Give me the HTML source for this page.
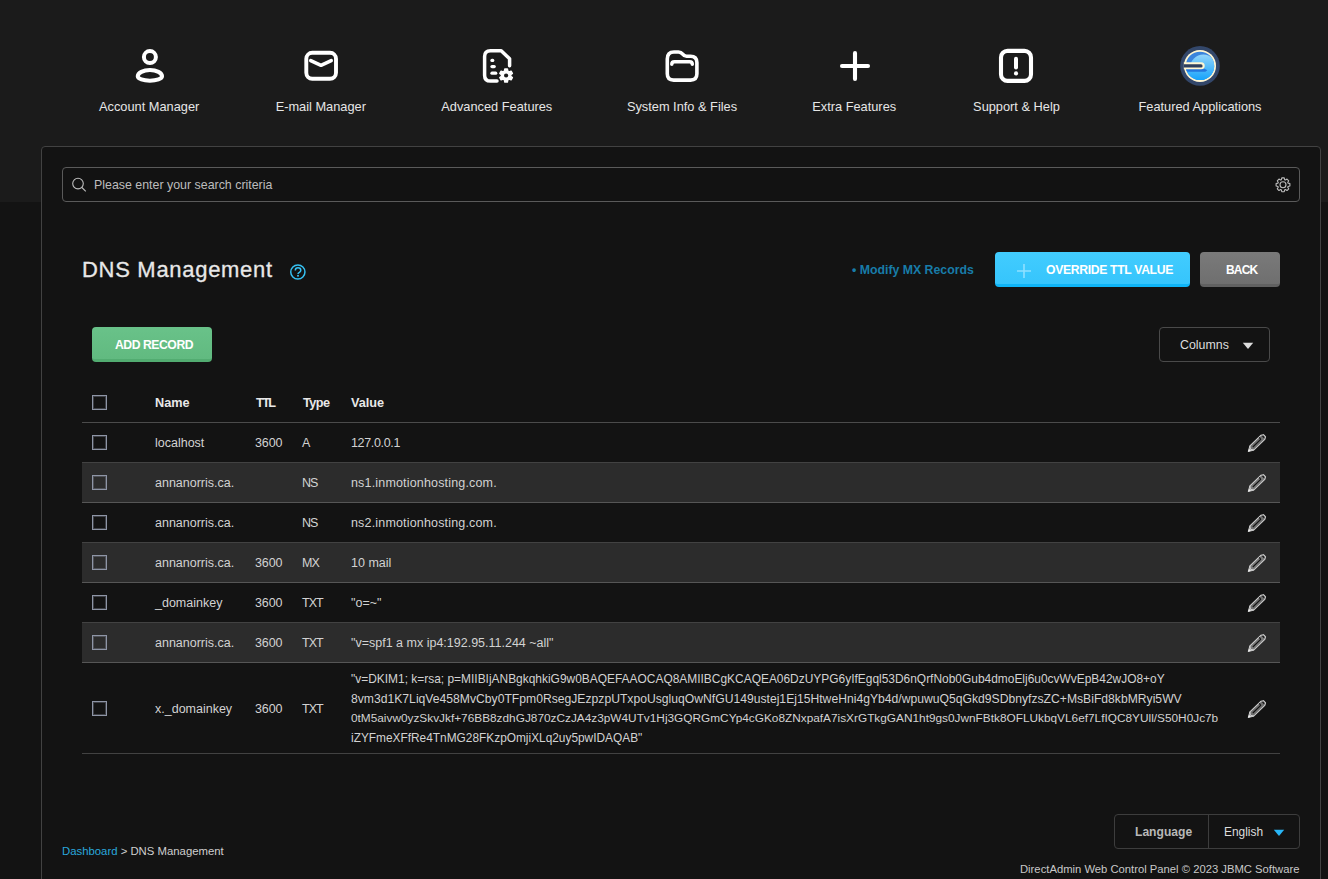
<!DOCTYPE html>
<html><head><meta charset="utf-8">
<style>
*{box-sizing:border-box;margin:0;padding:0}
html,body{width:1328px;height:879px;overflow:hidden;background:#131313;font-family:"Liberation Sans",sans-serif;color:#ddd}
.a{position:absolute;white-space:nowrap;line-height:14px}
#hdr{position:absolute;left:0;top:0;width:1328px;height:202px;background:#1b1b1b}
.nl{position:absolute;top:100px;width:200px;text-align:center;font-size:12.8px;color:#e6e6e6;line-height:14px;white-space:nowrap}
#panel{position:absolute;left:41px;top:146px;width:1280px;height:760px;background:#131313;border:1px solid #424242;border-radius:4px}
#search{position:absolute;left:62px;top:167px;width:1238px;height:35px;border:1px solid #5a5a5a;border-radius:4px;background:#121212}
.btn{position:absolute;border-radius:4px}
.cb{position:absolute;left:92px;width:15px;height:15px;border:1px solid #8e95a6;box-shadow:inset 0 0 0 1px rgba(142,149,166,.35)}
.row{position:absolute;left:82px;width:1198px;border-bottom:1px solid rgba(255,255,255,.2)}
.alt{background:#2c2c2c}
.cell{position:absolute;font-size:12.5px;color:#d2d2d2;line-height:14px;white-space:nowrap}
.th{position:absolute;font-size:12.7px;color:#e8e8e8;font-weight:bold;line-height:14px;top:396px}
.b{font-weight:bold;color:#fff}
</style></head><body>
<div id="hdr"></div>
<div class="nl" style="left:49.2px">Account Manager</div>
<div class="nl" style="left:220.8px">E-mail Manager</div>
<div class="nl" style="left:396.8px">Advanced Features</div>
<div class="nl" style="left:582.0px">System Info &amp; Files</div>
<div class="nl" style="left:754.2px">Extra Features</div>
<div class="nl" style="left:916.5px">Support &amp; Help</div>
<div class="nl" style="left:1100.0px">Featured Applications</div>
<div id="panel"></div>
<div id="search"></div>
<svg width="1328" height="210" viewBox="0 0 1328 210" style="position:absolute;left:0;top:0">
 <defs>
  <linearGradient id="fg" gradientUnits="userSpaceOnUse" x1="0" y1="53" x2="0" y2="80">
   <stop offset="0" stop-color="#9ad8fb"/><stop offset="1" stop-color="#16a3fb"/>
  </linearGradient>
  <clipPath id="fc"><circle cx="1200" cy="65.9" r="14.2"/></clipPath>
 </defs>
 <g fill="none" stroke="#fff" stroke-width="4" stroke-linecap="round" stroke-linejoin="round">
  <circle cx="149.9" cy="57.05" r="6"/>
  <path d="M137.8 76.3 A12.1 6.3 0 0 1 162 76.3 A12.1 4.4 0 0 1 137.8 76.3Z" stroke-width="4.1"/>
  <rect x="306.3" y="52.8" width="29.7" height="26" rx="6" stroke-width="3.9"/>
  <polyline points="310.75,60.6 321,65.3 331.2,60.6" stroke-width="3.6"/>
  <path d="M497 81.1 H490.5 Q484.6 81.1 484.6 75.2 V56.6 Q484.6 50.7 490.5 50.7 H501.2 L509.6 58.8 V65.8" stroke-width="3.5"/>
  <path d="M667.3 73.8 V59 Q667.3 52 674 52 H678.5 Q681 52 682.7 54.2 Q684.2 56.2 686.5 56.2 H690.5 Q696.9 56.2 696.9 62.6 V73.8 Q696.9 80.1 690.5 80.1 H673.7 Q667.3 80.1 667.3 73.8Z" stroke-width="3.6"/>
  <path d="M671.8 64.3 Q671.8 61.7 674.5 61.7 H689.6 Q692.3 61.7 692.3 64.3" stroke-width="3.5"/>
  <line x1="855" y1="53" x2="855" y2="79" stroke-width="4.1"/>
  <line x1="842" y1="66" x2="868" y2="66" stroke-width="4.1"/>
  <rect x="1001" y="50.9" width="30" height="30" rx="6.5" stroke-width="4.1"/>
  <line x1="1016" y1="58.8" x2="1016" y2="67.6"/>
 </g>
 <g stroke="#fff" stroke-width="3.3" stroke-linecap="round">
  <line x1="492" y1="60.4" x2="492.7" y2="60.4"/>
  <line x1="492" y1="66.6" x2="494.2" y2="66.6"/>
  <line x1="492" y1="73.2" x2="495.7" y2="73.2"/>
 </g>
 <circle cx="1016" cy="73.4" r="2.1" fill="#fff"/>
 <path d="M504.42 71.11 L504.84 69.02 L507.36 69.02 L507.78 71.11 L509.06 71.85 L511.08 71.17 L512.34 73.35 L510.74 74.76 L510.74 76.24 L512.34 77.65 L511.08 79.83 L509.06 79.15 L507.78 79.89 L507.36 81.98 L504.84 81.98 L504.42 79.89 L503.14 79.15 L501.12 79.83 L499.86 77.65 L501.46 76.24 L501.46 74.76 L499.86 73.35 L501.12 71.17 L503.14 71.85Z" fill="#fff" stroke="#fff" stroke-width="1.5" stroke-linejoin="round"/>
 <circle cx="506.1" cy="75.5" r="2.1" fill="#1b1b1b"/>
 <circle cx="1200" cy="65.9" r="19.8" fill="#33476a"/>
 <circle cx="1200" cy="65.9" r="16" fill="#fff6d2"/>
 <g clip-path="url(#fc)">
  <rect x="1184" y="50" width="32" height="32" fill="#3a84dc"/>
  <circle cx="1203.3" cy="67.8" r="13.2" fill="url(#fg)"/>
  <rect x="1184" y="66" width="32" height="16" fill="url(#fg)"/>
  <path d="M1184 68 H1203 L1207.4 70.3 L1205.4 71.8 H1184Z" fill="#2376de"/>
 </g>
 <path d="M1183.8 62.3 H1201.2 A3.5 3.5 0 0 1 1201.2 69.3 H1183.8Z" fill="#fff6d2"/>
 <path d="M1183.8 64.3 H1201 A1.6 1.6 0 0 1 1201 67.5 H1183.8Z" fill="#2e3f5e"/>
 <g fill="none" stroke="#bdbdbd" stroke-width="1.1">
  <circle cx="78" cy="183.6" r="5.3"/>
  <line x1="81.9" y1="187.5" x2="85.8" y2="191.4"/>
  <path d="M1281.32 179.77 L1281.78 177.91 L1284.22 177.91 L1284.68 179.77 L1285.36 180.06 L1287.02 179.07 L1288.73 180.78 L1287.74 182.44 L1288.03 183.12 L1289.89 183.58 L1289.89 186.02 L1288.03 186.48 L1287.74 187.16 L1288.73 188.82 L1287.02 190.53 L1285.36 189.54 L1284.68 189.83 L1284.22 191.69 L1281.78 191.69 L1281.32 189.83 L1280.64 189.54 L1278.98 190.53 L1277.27 188.82 L1278.26 187.16 L1277.97 186.48 L1276.11 186.02 L1276.11 183.58 L1277.97 183.12 L1278.26 182.44 L1277.27 180.78 L1278.98 179.07 L1280.64 180.06Z" stroke-linejoin="round"/>
  <circle cx="1283" cy="184.8" r="3"/>
 </g>
</svg>

<div class="a" style="left:94px;top:178px;font-size:12.4px;color:#bdbdbd">Please enter your search criteria</div>
<div class="a" style="left:82px;top:257px;font-size:22px;letter-spacing:0.7px;-webkit-text-stroke:0.3px #e8e8e8;color:#e8e8e8;line-height:26px">DNS Management</div>
<svg style="position:absolute;left:289px;top:264px" width="18" height="18" viewBox="0 0 18 18"><circle cx="8.85" cy="8" r="7.1" fill="none" stroke="#36c1f2" stroke-width="1.5"/><path d="M6.3 6.4 Q6.3 3.7 9 3.7 Q11.8 3.7 11.8 6.2 Q11.8 7.5 10.4 8.4 Q9 9.2 9 10.1" fill="none" stroke="#36c1f2" stroke-width="1.5" stroke-linecap="butt"/><rect x="8.1" y="10.9" width="1.8" height="1.7" fill="#36c1f2"/></svg>
<div class="a" style="left:852px;top:263px;font-size:12.3px;color:#187ca9;font-weight:bold">&bull; Modify MX Records</div>
<div class="btn" style="left:995px;top:252px;width:195px;height:35px;background:linear-gradient(#42ccfe,#36c5fc);border-bottom:3px solid #0fb5f7"></div>
<svg style="position:absolute;left:1016px;top:263px" width="16" height="16" viewBox="0 0 16 16"><path d="M8 1V15M1 8H15" stroke="#8fe0ff" stroke-width="1.6"/></svg>
<div class="a b" style="left:1046px;top:262.5px;font-size:12.2px;letter-spacing:-0.33px">OVERRIDE TTL VALUE</div>
<div class="btn" style="left:1200px;top:252px;width:80px;height:35px;background:linear-gradient(#7a7a7a,#6f6f6f);border-bottom:3px solid #616161"></div>
<div class="a b" style="left:1226px;top:262.5px;font-size:12px;letter-spacing:-0.85px">BACK</div>
<div class="btn" style="left:92px;top:327px;width:120px;height:35px;background:linear-gradient(#69c289,#61ba80);border-bottom:3px solid #52ac71"></div>
<div class="a b" style="left:115px;top:337.5px;font-size:12.2px;letter-spacing:-0.45px">ADD RECORD</div>
<div style="position:absolute;left:1159px;top:327px;width:111px;height:35px;border:1px solid #4a4a4a;border-radius:4px"></div>
<div class="a" style="left:1180px;top:338px;font-size:12.4px;color:#ddd">Columns</div>
<svg style="position:absolute;left:1242px;top:342px" width="12" height="8" viewBox="0 0 12 8"><path d="M0.8 0.8H11.2L6 7Z" fill="#dddddd"/></svg>
<div class="cb" style="top:395px"></div>
<div class="th" style="left:155px;letter-spacing:0px">Name</div>
<div class="th" style="left:256px;letter-spacing:-1.6px">TTL</div>
<div class="th" style="left:303px;letter-spacing:-0.5px">Type</div>
<div class="th" style="left:351px;letter-spacing:0px">Value</div>
<div style="position:absolute;left:82px;top:422px;width:1198px;height:1px;background:#4b4b4b"></div>
<div class="row" style="top:423px;height:40px"></div>
<div class="cb" style="top:435px"></div>
<div class="cell" style="left:155px;top:436px">localhost</div>
<div class="cell" style="left:255px;top:436px;letter-spacing:-0.13px">3600</div>
<div class="cell" style="left:302px;top:436px;letter-spacing:0px">A</div>
<div class="cell" style="left:351px;top:436px;letter-spacing:-0.35px">127.0.0.1</div>
<svg style="position:absolute;left:1246px;top:432px" width="24" height="24" viewBox="0 0 24 24"><g transform="translate(2.3 19.4) rotate(-44)"><path d="M0 0 L5 -2.9 H20.2 L22.6 -1.5 V1.5 L20.2 2.9 H5 Z" fill="rgba(185,185,185,.55)" stroke="#d0d0d0" stroke-width="1" stroke-linejoin="round"/><path d="M6.3 0 H17.6 M17.6 -2.6 V-0.5" stroke="#141414" stroke-width="1.2"/><path d="M5 -2.9 L3 0 L5 2.9" fill="none" stroke="#d0d0d0" stroke-width="0.9"/><path d="M0 0 L2.4 -1.35 L2.4 1.35Z" fill="#eeeeee"/><path d="M20.4 -1.6 L21.6 -0.9 V0.9 L20.4 1.6Z" fill="#141414"/></g></svg>
<div class="row alt" style="top:463px;height:40px"></div>
<div class="cb" style="top:475px"></div>
<div class="cell" style="left:155px;top:476px">annanorris.ca.</div>
<div class="cell" style="left:302px;top:476px;letter-spacing:-1.0px">NS</div>
<div class="cell" style="left:351px;top:476px;letter-spacing:0.17px">ns1.inmotionhosting.com.</div>
<svg style="position:absolute;left:1246px;top:472px" width="24" height="24" viewBox="0 0 24 24"><g transform="translate(2.3 19.4) rotate(-44)"><path d="M0 0 L5 -2.9 H20.2 L22.6 -1.5 V1.5 L20.2 2.9 H5 Z" fill="rgba(185,185,185,.55)" stroke="#d0d0d0" stroke-width="1" stroke-linejoin="round"/><path d="M6.3 0 H17.6 M17.6 -2.6 V-0.5" stroke="#141414" stroke-width="1.2"/><path d="M5 -2.9 L3 0 L5 2.9" fill="none" stroke="#d0d0d0" stroke-width="0.9"/><path d="M0 0 L2.4 -1.35 L2.4 1.35Z" fill="#eeeeee"/><path d="M20.4 -1.6 L21.6 -0.9 V0.9 L20.4 1.6Z" fill="#141414"/></g></svg>
<div class="row" style="top:503px;height:40px"></div>
<div class="cb" style="top:515px"></div>
<div class="cell" style="left:155px;top:516px">annanorris.ca.</div>
<div class="cell" style="left:302px;top:516px;letter-spacing:-1.0px">NS</div>
<div class="cell" style="left:351px;top:516px;letter-spacing:0.17px">ns2.inmotionhosting.com.</div>
<svg style="position:absolute;left:1246px;top:512px" width="24" height="24" viewBox="0 0 24 24"><g transform="translate(2.3 19.4) rotate(-44)"><path d="M0 0 L5 -2.9 H20.2 L22.6 -1.5 V1.5 L20.2 2.9 H5 Z" fill="rgba(185,185,185,.55)" stroke="#d0d0d0" stroke-width="1" stroke-linejoin="round"/><path d="M6.3 0 H17.6 M17.6 -2.6 V-0.5" stroke="#141414" stroke-width="1.2"/><path d="M5 -2.9 L3 0 L5 2.9" fill="none" stroke="#d0d0d0" stroke-width="0.9"/><path d="M0 0 L2.4 -1.35 L2.4 1.35Z" fill="#eeeeee"/><path d="M20.4 -1.6 L21.6 -0.9 V0.9 L20.4 1.6Z" fill="#141414"/></g></svg>
<div class="row alt" style="top:543px;height:40px"></div>
<div class="cb" style="top:555px"></div>
<div class="cell" style="left:155px;top:556px">annanorris.ca.</div>
<div class="cell" style="left:255px;top:556px;letter-spacing:-0.13px">3600</div>
<div class="cell" style="left:302px;top:556px;letter-spacing:-0.8px">MX</div>
<div class="cell" style="left:351px;top:556px;letter-spacing:0px">10 mail</div>
<svg style="position:absolute;left:1246px;top:552px" width="24" height="24" viewBox="0 0 24 24"><g transform="translate(2.3 19.4) rotate(-44)"><path d="M0 0 L5 -2.9 H20.2 L22.6 -1.5 V1.5 L20.2 2.9 H5 Z" fill="rgba(185,185,185,.55)" stroke="#d0d0d0" stroke-width="1" stroke-linejoin="round"/><path d="M6.3 0 H17.6 M17.6 -2.6 V-0.5" stroke="#141414" stroke-width="1.2"/><path d="M5 -2.9 L3 0 L5 2.9" fill="none" stroke="#d0d0d0" stroke-width="0.9"/><path d="M0 0 L2.4 -1.35 L2.4 1.35Z" fill="#eeeeee"/><path d="M20.4 -1.6 L21.6 -0.9 V0.9 L20.4 1.6Z" fill="#141414"/></g></svg>
<div class="row" style="top:583px;height:40px"></div>
<div class="cb" style="top:595px"></div>
<div class="cell" style="left:155px;top:596px">_domainkey</div>
<div class="cell" style="left:255px;top:596px;letter-spacing:-0.13px">3600</div>
<div class="cell" style="left:302px;top:596px;letter-spacing:-1.0px">TXT</div>
<div class="cell" style="left:351px;top:596px;letter-spacing:0px">&quot;o=~&quot;</div>
<svg style="position:absolute;left:1246px;top:592px" width="24" height="24" viewBox="0 0 24 24"><g transform="translate(2.3 19.4) rotate(-44)"><path d="M0 0 L5 -2.9 H20.2 L22.6 -1.5 V1.5 L20.2 2.9 H5 Z" fill="rgba(185,185,185,.55)" stroke="#d0d0d0" stroke-width="1" stroke-linejoin="round"/><path d="M6.3 0 H17.6 M17.6 -2.6 V-0.5" stroke="#141414" stroke-width="1.2"/><path d="M5 -2.9 L3 0 L5 2.9" fill="none" stroke="#d0d0d0" stroke-width="0.9"/><path d="M0 0 L2.4 -1.35 L2.4 1.35Z" fill="#eeeeee"/><path d="M20.4 -1.6 L21.6 -0.9 V0.9 L20.4 1.6Z" fill="#141414"/></g></svg>
<div class="row alt" style="top:623px;height:40px"></div>
<div class="cb" style="top:635px"></div>
<div class="cell" style="left:155px;top:636px">annanorris.ca.</div>
<div class="cell" style="left:255px;top:636px;letter-spacing:-0.13px">3600</div>
<div class="cell" style="left:302px;top:636px;letter-spacing:-1.0px">TXT</div>
<div class="cell" style="left:351px;top:636px;letter-spacing:0px">&quot;v=spf1 a mx ip4:192.95.11.244 ~all&quot;</div>
<svg style="position:absolute;left:1246px;top:632px" width="24" height="24" viewBox="0 0 24 24"><g transform="translate(2.3 19.4) rotate(-44)"><path d="M0 0 L5 -2.9 H20.2 L22.6 -1.5 V1.5 L20.2 2.9 H5 Z" fill="rgba(185,185,185,.55)" stroke="#d0d0d0" stroke-width="1" stroke-linejoin="round"/><path d="M6.3 0 H17.6 M17.6 -2.6 V-0.5" stroke="#141414" stroke-width="1.2"/><path d="M5 -2.9 L3 0 L5 2.9" fill="none" stroke="#d0d0d0" stroke-width="0.9"/><path d="M0 0 L2.4 -1.35 L2.4 1.35Z" fill="#eeeeee"/><path d="M20.4 -1.6 L21.6 -0.9 V0.9 L20.4 1.6Z" fill="#141414"/></g></svg>
<div class="row" style="top:663px;height:91px"></div>
<div class="cb" style="top:701px"></div>
<div class="cell" style="left:155px;top:702px">x._domainkey</div>
<div class="cell" style="left:255px;top:702px;letter-spacing:-0.13px">3600</div>
<div class="cell" style="left:302px;top:702px;letter-spacing:-1px">TXT</div>
<div class="cell" style="left:351px;top:672.0px;font-size:11.95px">&quot;v=DKIM1; k=rsa; p=MIIBIjANBgkqhkiG9w0BAQEFAAOCAQ8AMIIBCgKCAQEA06DzUYPG6yIfEgql53D6nQrfNob0Gub4dmoElj6u0cvWvEpB42wJO8+oY</div>
<div class="cell" style="left:351px;top:691.5px;font-size:12.16px">8vm3d1K7LiqVe458MvCby0TFpm0RsegJEzpzpUTxpoUsgluqOwNfGU149ustej1Ej15HtweHni4gYb4d/wpuwuQ5qGkd9SDbnyfzsZC+MsBiFd8kbMRyi5WV</div>
<div class="cell" style="left:351px;top:711.0px;font-size:11.83px">0tM5aivw0yzSkvJkf+76BB8zdhGJ870zCzJA4z3pW4UTv1Hj3GQRGmCYp4cGKo8ZNxpafA7isXrGTkgGAN1ht9gs0JwnFBtk8OFLUkbqVL6ef7LfIQC8YUll/S50H0Jc7b</div>
<div class="cell" style="left:351px;top:730.5px;font-size:11.89px">iZYFmeXFfRe4TnMG28FKzpOmjiXLq2uy5pwIDAQAB&quot;</div>
<svg style="position:absolute;left:1246px;top:698px" width="24" height="24" viewBox="0 0 24 24"><g transform="translate(2.3 19.4) rotate(-44)"><path d="M0 0 L5 -2.9 H20.2 L22.6 -1.5 V1.5 L20.2 2.9 H5 Z" fill="rgba(185,185,185,.55)" stroke="#d0d0d0" stroke-width="1" stroke-linejoin="round"/><path d="M6.3 0 H17.6 M17.6 -2.6 V-0.5" stroke="#141414" stroke-width="1.2"/><path d="M5 -2.9 L3 0 L5 2.9" fill="none" stroke="#d0d0d0" stroke-width="0.9"/><path d="M0 0 L2.4 -1.35 L2.4 1.35Z" fill="#eeeeee"/><path d="M20.4 -1.6 L21.6 -0.9 V0.9 L20.4 1.6Z" fill="#141414"/></g></svg>
<div class="a" style="left:62px;top:844px;font-size:11.35px;color:#cfcfcf"><span style="color:#2aa8dc">Dashboard</span> &gt; DNS Management</div>
<div style="position:absolute;left:1114px;top:814px;width:186px;height:35px;border:1px solid #3d3d3d;border-radius:4px"></div>
<div style="position:absolute;left:1208px;top:815px;width:1px;height:33px;background:#3d3d3d"></div>
<div class="a" style="left:1135px;top:825px;font-size:12.1px;color:#b8b8b8;font-weight:bold">Language</div>
<div class="a" style="left:1224px;top:825px;font-size:11.9px;color:#dddddd">English</div>
<svg style="position:absolute;left:1273px;top:828.5px" width="12" height="8" viewBox="0 0 12 8"><path d="M0.8 0.8H11.2L6 7Z" fill="#29b6f6"/></svg>
<div class="a" style="left:1020px;top:862px;font-size:11.25px;color:#c8c8c8">DirectAdmin Web Control Panel &copy; 2023 JBMC Software</div>
</body></html>
